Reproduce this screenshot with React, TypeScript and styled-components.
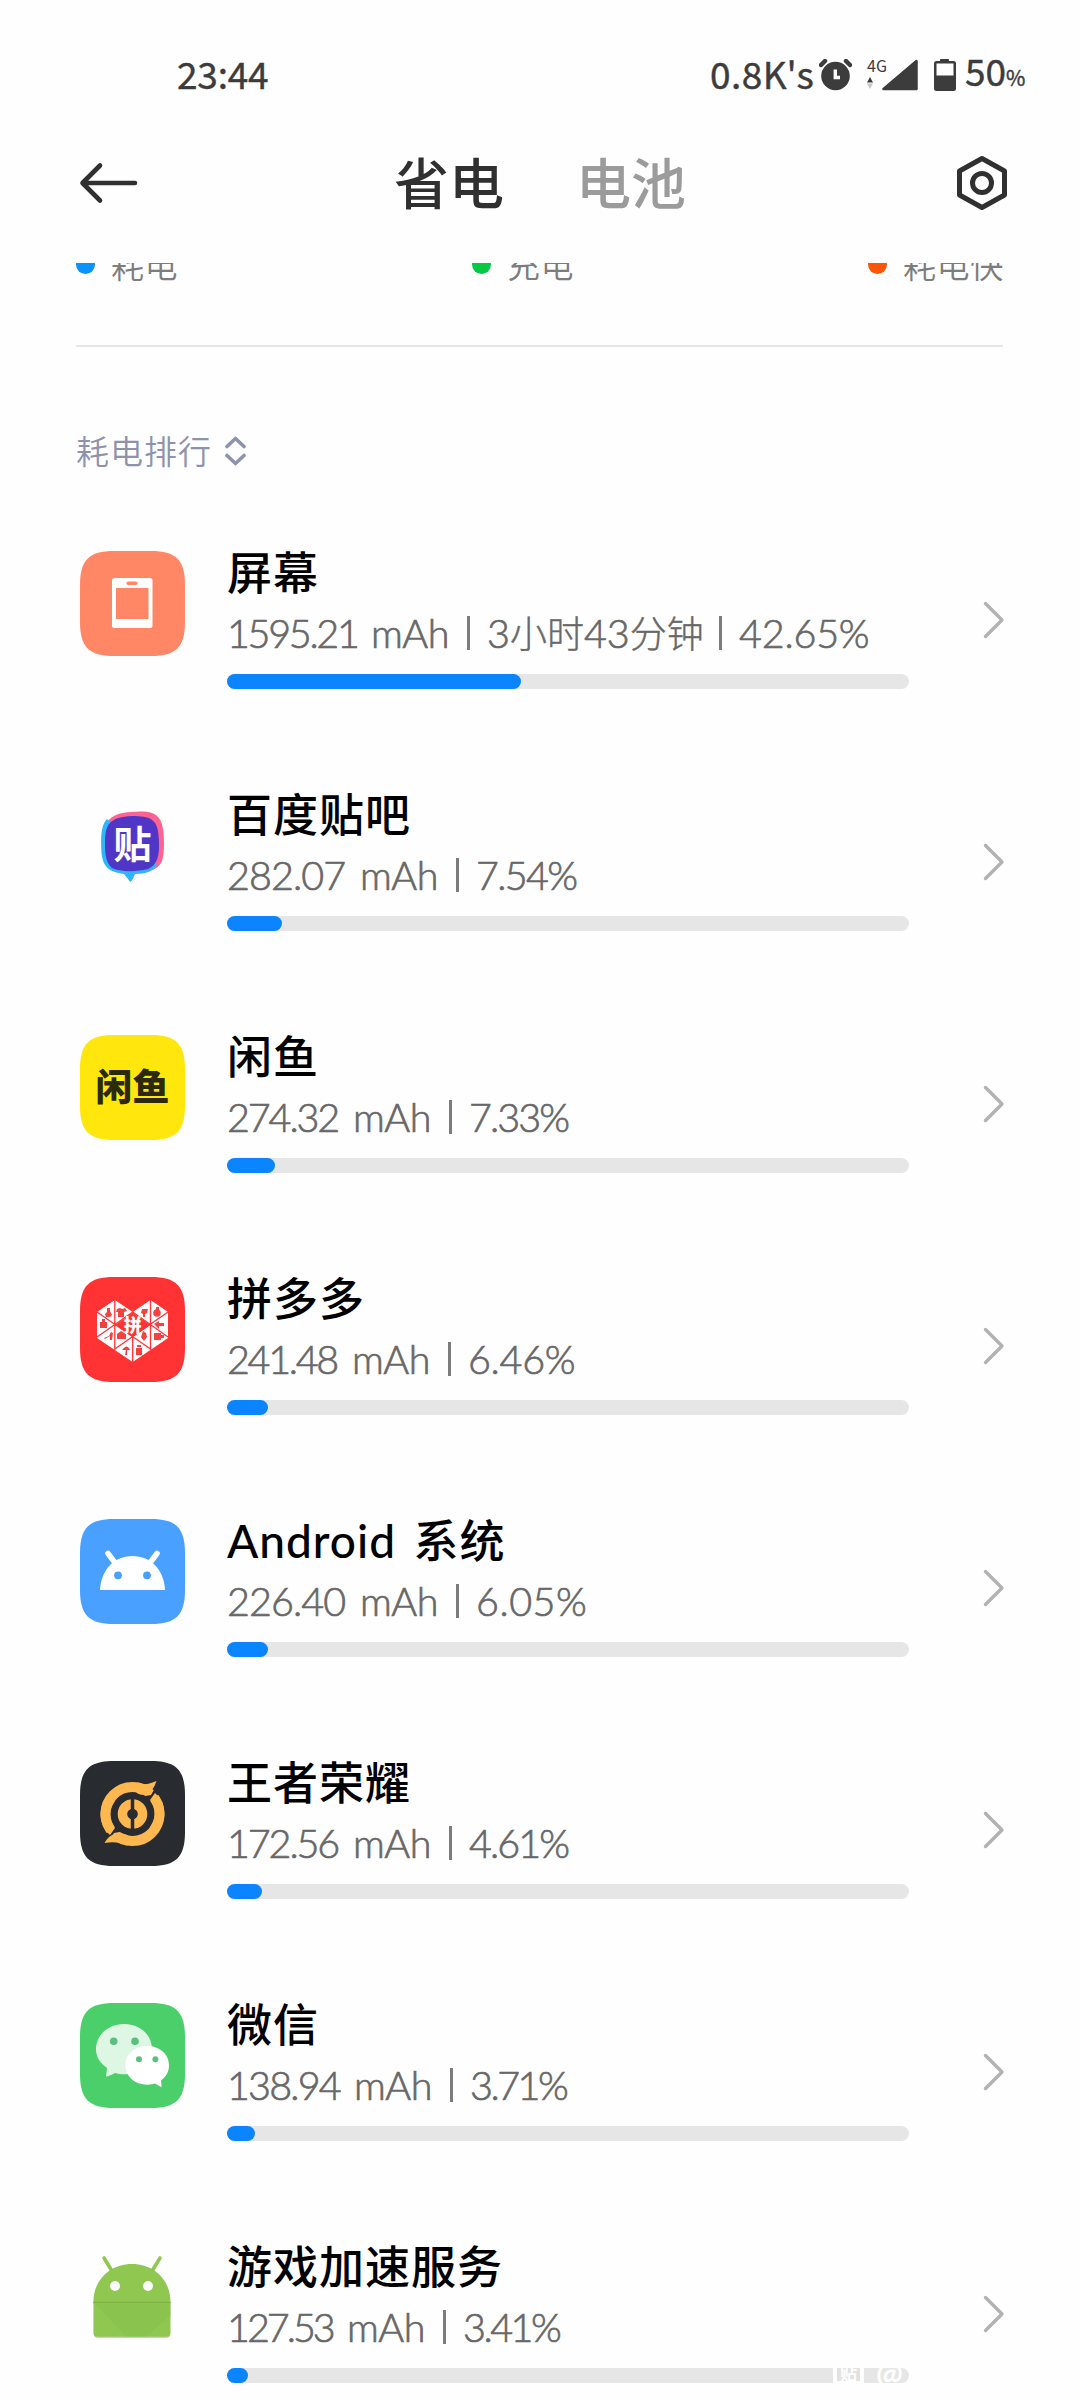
import React from 'react'
import styled, { createGlobalStyle } from 'styled-components'

const GlobalStyle = createGlobalStyle`
  body {
    margin: 0;
    background: #fefefe;
    font-family: 'Lato', 'Noto Sans CJK SC', sans-serif;
  }

  * {
    box-sizing: border-box;
  }

  svg {
    display: block;
    flex: none;
  }
`

const Screen = styled.div`
  display: flex;
  flex-direction: column;
  width: 1080px;
  height: 2400px;
  overflow: hidden;
  background: #fefefe;
`

const StatusBar = styled.div`
  display: flex;
  align-items: center;
  height: 103px;
  padding: 47px 52px 0 177px;
  color: #3c3c3c;
  font-family: 'Noto Sans CJK SC', sans-serif;
  font-size: 37px;
  font-weight: 400;
  line-height: 52px;
  -webkit-text-stroke: 0.4px #3c3c3c;
`

const Clock = styled.div`
  margin-top: -5px;
  letter-spacing: -0.2px;
`

const StatusIcons = styled.div`
  display: flex;
  align-items: center;
  margin-left: auto;
`

const Speed = styled.span`
  width: 107px;
  margin: -5px 2px 0 0;
  letter-spacing: 0.5px;
  white-space: nowrap;
`

const Network = styled.div`
  display: flex;
  flex-direction: column;
  align-items: flex-start;
  width: 15px;
  height: 34px;
  margin-left: 15px;
  font-size: 16px;
  line-height: 15px;
  -webkit-text-stroke: 0;
`

const NetworkArrows = styled.svg`
  margin-top: 4px;
`

const Level = styled.span`
  display: flex;
  align-items: baseline;
  width: 63px;
  margin: -3px 0 0 9px;
  white-space: nowrap;

  small {
    font-size: 21px;
  }
`

const Header = styled.header`
  display: flex;
  align-items: center;
  height: 160px;
  padding: 0 70px 0 77px;
`

const Tabs = styled.nav`
  display: flex;
  gap: 72px;
  margin-left: 254px;
`

const Tab = styled.span<{ $active?: boolean }>`
  color: ${({ $active }) => ($active ? '#303030' : '#9b9b9b')};
  font-size: 55px;
  font-weight: 500;
  line-height: 80px;
`

const SettingsButton = styled.div`
  margin-left: auto;
`

const Content = styled.main`
  flex: 1;
  padding: 0 74px 0 76px;
  overflow: hidden;
`

const Legend = styled.div`
  display: grid;
  grid-template-columns: 396px 396px auto;
  height: 84px;
  border-bottom: 2px solid #e6e6e6;
  margin: 0 3px 74px 0;
`

const LegendItem = styled.div<{ $color: string }>`
  display: flex;
  align-items: center;
  gap: 16px;
  height: 40px;
  margin-top: -19px;
  color: #7d7d7d;
  font-size: 33px;
  font-weight: 350;
  letter-spacing: 0.6px;
  white-space: nowrap;

  &::before {
    content: '';
    width: 19px;
    height: 19px;
    border-radius: 50%;
    background: ${({ $color }) => $color};
  }
`

const SortButton = styled.div`
  display: flex;
  align-items: center;
  gap: 13px;
  height: 60px;
  color: #8e93ad;
  font-size: 33px;
  font-weight: 350;
  letter-spacing: 1px;

  span {
    margin-top: -3px;
  }
`

const List = styled.div`
  padding: 70px 0 0 4px;
`

const Row = styled.div`
  display: flex;
  height: 242px;
`

const Info = styled.div`
  width: 682px;
  flex: none;
  margin-left: 42px;
`

const Name = styled.div`
  height: 60px;
  margin-top: -8px;
  color: #000;
  font-size: 45px;
  font-weight: 500;
  line-height: 60px;
  letter-spacing: 1px;
  word-spacing: 5px;
  white-space: nowrap;
`

const Latin = styled.span`
  font-size: 46px;
`

const Detail = styled.div`
  display: flex;
  align-items: center;
  height: 56px;
  margin-top: 2px;
  color: #686868;
  font-size: 39.5px;
  font-weight: 300;
  line-height: 56px;
  white-space: nowrap;
  -webkit-text-stroke: 0.7px #686868;
`

const Amount = styled.span<{ $width: number }>`
  display: flex;
  justify-content: space-between;
  width: ${({ $width }) => $width}px;
`

const Figure = styled.span<{ $spacing: number }>`
  letter-spacing: ${({ $spacing }) => $spacing}px;
`

const Separator = styled.span`
  width: 3px;
  height: 34px;
  margin: 0 17px 0 18px;
  background: #7c7c7c;
`

const Duration = styled.span`
  width: 214px;

  small {
    font-size: 37px;
    -webkit-text-stroke: 0.4px #686868;
  }
`

const Track = styled.div`
  height: 15px;
  margin-top: 13px;
  border-radius: 8px;
  background: #e6e6e6;
`

const Fill = styled.div<{ $width: number }>`
  width: ${({ $width }) => $width}px;
  height: 15px;
  border-radius: 8px;
  background: #0a85ff;
`

const ArrowIcon = styled.svg`
  margin: 50px 0 0 73px;
`

const Watermark = styled.div`
  position: absolute;
  top: 2357px;
  left: 833px;
  display: flex;
  align-items: center;
  gap: 12px;
  height: 31px;
  color: #fefefe;
  font-size: 32px;
  font-weight: 700;
`

const WatermarkBadge = styled.span`
  display: flex;
  align-items: center;
  justify-content: center;
  width: 31px;
  height: 31px;
  border: 4px solid #fefefe;
  border-radius: 4px;
  background: linear-gradient(#fefefe 30%, #e2e2e2 30%, #e2e2e2 86%, #fefefe 86%);
  font-size: 17px;
`

const TILE =
  'M0 34C0 9 9 0 34 0H71C96 0 105 9 105 34V71C105 96 96 105 71 105H34C9 105 0 96 0 71Z'

type TIconProps = {
  tile?: string
  children: React.ReactNode
}

function AppIcon({ tile, children }: TIconProps) {
  return (
    <svg width="105" height="105" viewBox="0 0 105 105">
      {tile && <path d={TILE} fill={tile} />}
      {children}
    </svg>
  )
}

const glyphFont = "'Noto Sans CJK SC', sans-serif"

const ScreenIcon = () => (
  <AppIcon tile="#ff8766">
    <rect x="32" y="27" width="40.5" height="50" rx="2.5" fill="#fff" />
    <rect x="36" y="37" width="32.5" height="31" fill="#ff8766" />
    <rect x="46.5" y="30.5" width="11" height="3.5" rx="1.7" fill="#ff8766" />
  </AppIcon>
)

const TiebaIcon = () => (
  <AppIcon>
    <path
      d="M26 32C31 19 47 19 62 18.500C75 19 81 23 83 36C85 50 84 66 81 70C77 77 70 78 60 78H40Z"
      fill="#ff6392"
    />
    <path
      d="M27 26C20 33 21 48 21.500 60C23 74 29 79 44 81L50 88.500C51 89.500 52 88 55 81C66 81 74 78 77 72Z"
      fill="#30b5fb"
    />
    <path
      d="M52 23C70 23 77 26 78.500 42C80 59 79 71 68 76C56 79 40 79 32 75C25 69 25 59 25 49C25 31 30 24 52 23Z"
      fill="#5036c6"
    />
    <text x="33.500" y="65" fontFamily={glyphFont} fontSize="38" fontWeight="700" fill="#fff">
      贴
    </text>
  </AppIcon>
)

const XianyuIcon = () => (
  <AppIcon tile="#ffe60d">
    <text x="15.500" y="66" fontFamily={glyphFont} fontSize="37" fontWeight="900" fill="#2b2a0c">
      闲鱼
    </text>
  </AppIcon>
)

const PinduoduoIcon = () => (
  <AppIcon tile="#ff3333">
    <path d="M17 35L34.800 23L52.700 35L70.500 23L88 35V61L52.700 85L17 61Z" fill="#fff" />
    <path
      d="M17 35L70.500 72M88 35L34.800 72M34.800 23V73M70.500 23V73M17 60L52.700 35L88 60M52.700 60V85"
      stroke="#ff3333"
      strokeWidth="1.300"
      fill="none"
    />
    <path d="M35.500 47.800L52.700 35.500L70 47.800L52.700 60Z" fill="#ff3333" />
    <g fill="#f4433f">
      <path d="M27 31h3v3l2 4-2 2h-4l-1-3 2-2zM37 32l3-1 2 1 3-1 2 3-3 1v5h-6v-5h-2zM62 32h6l-1 4-2 1v3h-2v-3l-2-1z" />
      <circle cx="77" cy="36" r="3.800" />
      <path d="M76 30h3v3h-3zM20 45h7v6h-7zM22 42h3v3h-3zM74 47l5-3v2h5v3h-5v3zM24 61l5-2 2-4 2 1-1 7h-2v-4l-5 3zM37 57l4-3 5 3v5h-9zM63 54l3 2 1 4-3 4-3-4zM74 56h7v7h-7zM81 58h3v3h-3zM42 73q5-7 8 0zM46 72h1v6h-2zM56 71h6v7h-6zM57 68h4v2h-4z" />
    </g>
    <text x="43.800" y="54.500" fontFamily={glyphFont} fontSize="18" fontWeight="900" fill="#fff">
      拼
    </text>
  </AppIcon>
)

const AndroidIcon = () => (
  <AppIcon tile="#4aa0ff">
    <path d="M20 71C21 51 34 37 52.500 37S84 51 85 71Z" fill="#fff" />
    <path
      d="M28 34.500L36 45M77 34.500L69 45"
      stroke="#fff"
      strokeWidth="5.500"
      strokeLinecap="round"
    />
    <circle cx="38" cy="56.300" r="3.900" fill="#4aa0ff" />
    <circle cx="67" cy="56.300" r="3.900" fill="#4aa0ff" />
  </AppIcon>
)

const HonorIcon = () => (
  <AppIcon tile="#282c30">
    <circle cx="52.500" cy="53" r="27" stroke="#ffb850" strokeWidth="10" fill="none" />
    <circle cx="52.500" cy="53" r="14.800" fill="#ffb850" />
    <path
      d="M60 36L71 34L80 18L88 26L74 37L68 42ZM45 70L34 72L25 88L17 80L31 69L37 64Z"
      fill="#282c30"
    />
    <path
      d="M58 21.500C64 24.500 69 23 76.500 20C74 27 71 31 67 32.500C62 34.500 59 34 56 31ZM47 84.500C41 81.500 33 80.500 24.500 82C28 76 32 73 37 72.500C42 72 45 73 49 75Z"
      fill="#ffb850"
    />
    <path
      d="M75 32C86 42 88 58 78 71L70 66C77 56 76 47 70 39ZM30 74C19 64 17 48 27 35L35 40C28 50 29 59 35 67Z"
      fill="#ffb850"
    />
    <path d="M52.500 37V69" stroke="#282c30" strokeWidth="3.500" />
    <circle cx="52.500" cy="53" r="5.300" fill="#282c30" />
  </AppIcon>
)

const WechatIcon = () => (
  <AppIcon tile="#4bcf6b">
    <path
      d="M44 21C28.500 21 16 32 16 46C16 54 20 60 27 65L26 73C26 74 27 74 35 70C38 71 41 71.300 44 71.300C60 71.300 72 60 72 46S60 21 44 21Z"
      fill="#def7e5"
    />
    <path
      d="M67.300 43C55 43 45.400 51 45.400 62.300S55 81.700 67.300 81.700C70 81.700 73 81 75 80.500L81 84C82 84 81.500 82 81 77.500C86 74 89 69 89 62.300C89 51 79.500 43 67.300 43Z"
      fill="#fff"
    />
    <circle cx="33.700" cy="38.300" r="3.800" fill="#5abf80" />
    <circle cx="55" cy="38.300" r="3.800" fill="#5abf80" />
    <circle cx="59" cy="56.300" r="3" fill="#5abf80" />
    <circle cx="75.400" cy="56.300" r="3" fill="#5abf80" />
  </AppIcon>
)

const DroidIcon = () => (
  <AppIcon>
    <path d="M14 88V90Q14 93 18 93H86Q90 93 90 90V88Z" fill="#ccd3c4" />
    <path
      d="M13.400 57C13.400 35 30 19 52 19S90.500 35 90.500 57V88Q90.500 91.700 87 91.700H17Q13.400 91.700 13.400 88Z"
      fill="#8fc751"
    />
    <path d="M13.400 57H90.500V70L66 91.700H46Z" fill="#83bd49" opacity="0.400" />
    <path d="M13.400 57.300H90.500" stroke="#7cb342" strokeWidth="1.200" />
    <path
      d="M24 13L32 26M80 13L72 26"
      stroke="#8fc751"
      strokeWidth="3.600"
      strokeLinecap="round"
    />
    <circle cx="35" cy="41" r="5" fill="#fafafa" />
    <circle cx="68" cy="41" r="5" fill="#fafafa" />
  </AppIcon>
)

type TUsage = {
  name: React.ReactNode
  icon: () => React.ReactElement
  amount: string
  amountWidth: number
  // tracking of the amount and of the percentage
  spacing: [number, number]
  duration?: React.ReactNode
  percent: string
  bar: number
}

const usages: TUsage[] = [
  {
    name: '屏幕',
    icon: ScreenIcon,
    amount: '1595.21',
    amountWidth: 222,
    spacing: [-2.3, -0.2],
    duration: (
      <>
        3<small>小时</small>43<small>分钟</small>
      </>
    ),
    percent: '42.65%',
    bar: 294,
  },
  {
    name: '百度贴吧',
    icon: TiebaIcon,
    amount: '282.07',
    amountWidth: 211,
    spacing: [-0.9, -1.7],
    percent: '7.54%',
    bar: 55,
  },
  {
    name: '闲鱼',
    icon: XianyuIcon,
    amount: '274.32',
    amountWidth: 204,
    spacing: [-2.1, -1.9],
    percent: '7.33%',
    bar: 48,
  },
  {
    name: '拼多多',
    icon: PinduoduoIcon,
    amount: '241.48',
    amountWidth: 203,
    spacing: [-2.3, -0.3],
    percent: '6.46%',
    bar: 41,
  },
  {
    name: (
      <>
        <Latin>Android</Latin> 系统
      </>
    ),
    icon: AndroidIcon,
    amount: '226.40',
    amountWidth: 211,
    spacing: [-0.9, 0.5],
    percent: '6.05%',
    bar: 41,
  },
  {
    name: '王者荣耀',
    icon: HonorIcon,
    amount: '172.56',
    amountWidth: 204,
    spacing: [-2.1, -1.9],
    percent: '4.61%',
    bar: 35,
  },
  {
    name: '微信',
    icon: WechatIcon,
    amount: '138.94',
    amountWidth: 205,
    spacing: [-1.8, -2.5],
    percent: '3.71%',
    bar: 28,
  },
  {
    name: '游戏加速服务',
    icon: DroidIcon,
    amount: '127.53',
    amountWidth: 198,
    spacing: [-3, -2.5],
    percent: '3.41%',
    bar: 21,
  },
]

function UsageRow({ usage }: { usage: TUsage }) {
  const Icon = usage.icon
  const [amountSpacing, percentSpacing] = usage.spacing
  return (
    <Row>
      <Icon />
      <Info>
        <Name>{usage.name}</Name>
        <Detail>
          <Amount $width={usage.amountWidth}>
            <Figure $spacing={amountSpacing}>{usage.amount}</Figure>
            <Figure $spacing={-0.4}>mAh</Figure>
          </Amount>
          <Separator />
          {usage.duration && (
            <>
              <Duration>{usage.duration}</Duration>
              <Separator />
            </>
          )}
          <Figure $spacing={percentSpacing}>{usage.percent}</Figure>
        </Detail>
        <Track>
          <Fill $width={usage.bar} />
        </Track>
      </Info>
      <ArrowIcon width="24" height="38" viewBox="0 0 24 38" fill="none">
        <path
          d="M3.500 2.500L20 19L3.500 35.500"
          stroke="#b2b2b2"
          strokeWidth="3.400"
          strokeLinecap="round"
          strokeLinejoin="round"
        />
      </ArrowIcon>
    </Row>
  )
}

function App() {
  return (
    <Screen>
      <GlobalStyle />
      <StatusBar>
        <Clock>23:44</Clock>
        <StatusIcons>
          <Speed>0.8K's</Speed>
          <svg width="33" height="32" viewBox="0 0 33 32">
            <circle cx="16.500" cy="17" r="14.300" fill="#3c3c3c" />
            <path
              d="M2 6L6 2M31 6L27 2"
              stroke="#3c3c3c"
              strokeWidth="4.500"
              strokeLinecap="round"
            />
            <path d="M16.300 10.500V18.500H21" stroke="#fefefe" strokeWidth="3.400" fill="none" />
          </svg>
          <Network>
            4G
            <NetworkArrows width="6" height="12" viewBox="0 0 6 12">
              <path d="M0 5.500L3 0L6 5.500Z" fill="#3c3c3c" />
              <path d="M0 6.500L3 12L6 6.500Z" fill="#c8c8c8" />
            </NetworkArrows>
          </Network>
          <svg width="36" height="32" viewBox="0 0 36 32">
            <path
              d="M1.500 30L34.500 2V30Z"
              fill="#3c3c3c"
              stroke="#3c3c3c"
              strokeWidth="2.500"
              strokeLinejoin="round"
            />
          </svg>
          <svg width="38" height="34" viewBox="0 0 38 34">
            <rect x="22" y="1" width="9" height="4" rx="1" fill="#3c3c3c" />
            <rect x="16" y="3" width="22" height="30" rx="2.500" fill="#3c3c3c" />
            <rect x="18.500" y="5.500" width="17" height="12" fill="#fefefe" />
          </svg>
          <Level>
            50<small>%</small>
          </Level>
        </StatusIcons>
      </StatusBar>

      <Header>
        <svg width="63" height="44" viewBox="0 0 63 44" fill="none">
          <path
            d="M23 4.500L5.500 22L23 39.500M6 22H58"
            stroke="#303030"
            strokeWidth="4.600"
            strokeLinecap="round"
            strokeLinejoin="round"
          />
        </svg>
        <Tabs>
          <Tab $active>省电</Tab>
          <Tab>电池</Tab>
        </Tabs>
        <SettingsButton>
          <svg width="56" height="58" viewBox="0 0 56 58" fill="none">
            <path
              d="M28 4.500L50.500 17V41L28 53.500L5.500 41V17Z"
              stroke="#303030"
              strokeWidth="5"
              strokeLinejoin="round"
            />
            <circle cx="28" cy="29" r="9.500" stroke="#303030" strokeWidth="5" />
          </svg>
        </SettingsButton>
      </Header>

      <Content>
        <Legend>
          <LegendItem $color="#0b93fb">耗电</LegendItem>
          <LegendItem $color="#05c943">充电</LegendItem>
          <LegendItem $color="#fb5607">耗电快</LegendItem>
        </Legend>
        <SortButton>
          <span>耗电排行</span>
          <svg width="21" height="30" viewBox="0 0 21 30" fill="none">
            <path
              d="M2 10.500L10.500 2.500L19 10.500M2 19.500L10.500 27.500L19 19.500"
              stroke="#8e93ad"
              strokeWidth="3.600"
              strokeLinecap="round"
              strokeLinejoin="round"
            />
          </svg>
        </SortButton>
        <List>
          {usages.map((usage) => (
            <UsageRow key={usage.amount} usage={usage} />
          ))}
        </List>
      </Content>

      <Watermark>
        <WatermarkBadge>贴</WatermarkBadge>
        <span>@</span>
      </Watermark>
    </Screen>
  )
}

export default App
